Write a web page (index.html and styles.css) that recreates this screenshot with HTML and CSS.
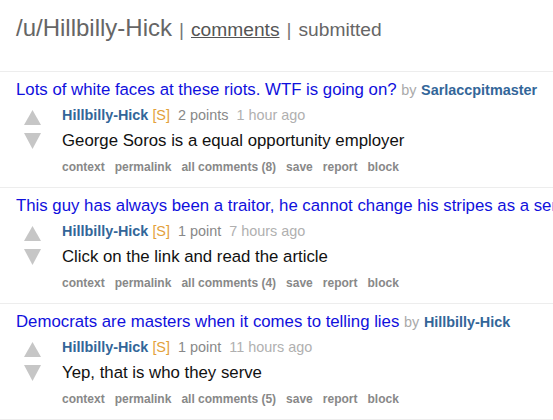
FILE: index.html
```html
<!DOCTYPE html>
<html lang="en">
<head>
<meta charset="utf-8">
<title>/u/Hillbilly-Hick</title>
<link rel="stylesheet" href="styles.css">
</head>
<body>
<header class="header">
  <span class="user">/u/Hillbilly-Hick</span>
  <span class="sep">|</span>
  <a class="tab selected" href="#">comments</a>
  <span class="sep">|</span>
  <a class="tab" href="#">submitted</a>
</header>
<div class="listing">
  <div class="thing">
    <p class="parent"><a class="title" href="#">Lots of white faces at these riots. WTF is going on?</a> <span class="by">by</span> <a class="author" href="#">Sarlaccpitmaster</a></p>
    <div class="row">
      <div class="midcol">
        <svg class="arrow up" width="17" height="15" viewBox="0 0 17 15"><polygon points="8.5,0 17,15 0,15"/></svg>
        <svg class="arrow down" width="17" height="16" viewBox="0 0 17 16"><polygon points="0,0 17,0 8.5,16"/></svg>
      </div>
      <div class="entry">
        <p class="tagline"><a class="author" href="#">Hillbilly-Hick</a> <span class="submitter">[S]</span> <span class="score">2 points</span> <span class="time">1 hour ago</span></p>
        <p class="body">George Soros is a equal opportunity employer</p>
        <ul class="buttons">
          <li>context</li><li>permalink</li><li>all comments (8)</li><li>save</li><li>report</li><li>block</li>
        </ul>
      </div>
    </div>
  </div>
  <div class="thing">
    <p class="parent"><a class="title" href="#">This guy has always been a traitor, he cannot change his stripes as a senator</a> <span class="by">by</span> <a class="author" href="#">Hillbilly-Hick</a></p>
    <div class="row">
      <div class="midcol">
        <svg class="arrow up" width="17" height="15" viewBox="0 0 17 15"><polygon points="8.5,0 17,15 0,15"/></svg>
        <svg class="arrow down" width="17" height="16" viewBox="0 0 17 16"><polygon points="0,0 17,0 8.5,16"/></svg>
      </div>
      <div class="entry">
        <p class="tagline"><a class="author" href="#">Hillbilly-Hick</a> <span class="submitter">[S]</span> <span class="score">1 point</span> <span class="time">7 hours ago</span></p>
        <p class="body">Click on the link and read the article</p>
        <ul class="buttons">
          <li>context</li><li>permalink</li><li>all comments (4)</li><li>save</li><li>report</li><li>block</li>
        </ul>
      </div>
    </div>
  </div>
  <div class="thing">
    <p class="parent"><a class="title" href="#">Democrats are masters when it comes to telling lies</a> <span class="by">by</span> <a class="author" href="#">Hillbilly-Hick</a></p>
    <div class="row">
      <div class="midcol">
        <svg class="arrow up" width="17" height="15" viewBox="0 0 17 15"><polygon points="8.5,0 17,15 0,15"/></svg>
        <svg class="arrow down" width="17" height="16" viewBox="0 0 17 16"><polygon points="0,0 17,0 8.5,16"/></svg>
      </div>
      <div class="entry">
        <p class="tagline"><a class="author" href="#">Hillbilly-Hick</a> <span class="submitter">[S]</span> <span class="score">1 point</span> <span class="time">11 hours ago</span></p>
        <p class="body">Yep, that is who they serve</p>
        <ul class="buttons">
          <li>context</li><li>permalink</li><li>all comments (5)</li><li>save</li><li>report</li><li>block</li>
        </ul>
      </div>
    </div>
  </div>
</div>
</body>
</html>
```
FILE: styles.css
```css
html, body {
  margin: 0;
  padding: 0;
  background: #fff;
}
body {
  font-family: "Liberation Sans", Arial, sans-serif;
  color: #222;
  overflow: hidden;
}
a {
  text-decoration: none;
}
p, ul {
  margin: 0;
  padding: 0;
}

.header {
  height: 71px;
  box-sizing: border-box;
  padding: 14px 16px 0;
  display: flex;
  align-items: baseline;
  gap: 7px;
  line-height: 28px;
}
.user {
  font-size: 24px;
  color: #666;
}
.sep {
  font-size: 19.2px;
  color: #777;
}
.tab {
  font-size: 19.2px;
  color: #666;
}
.tab.selected {
  color: #555;
  text-decoration: underline;
}

.thing {
  border-top: 1px solid #ededed;
  padding: 8px 0 12px 16px;
}
.thing:last-child {
  border-bottom: 1px solid #ededed;
}
.parent {
  font-size: 16.8px;
  line-height: 20px;
  white-space: nowrap;
  overflow: hidden;
}
.title {
  color: #1010dd;
}
.by {
  font-size: 14.4px;
  color: #aaa;
}
.author {
  font-size: 14.4px;
  font-weight: bold;
  color: #369;
}

.row {
  display: flex;
  margin-top: 6px;
}
.midcol {
  width: 46px;
  flex: none;
  box-sizing: border-box;
  padding: 4px 0 0 8px;
  display: flex;
  flex-direction: column;
  gap: 8px;
}
.arrow {
  display: block;
  fill: #c6c6c6;
}
.entry {
  flex: 1;
  min-width: 0;
}
.tagline {
  font-size: 14.4px;
  line-height: 18px;
  color: #888;
}
.submitter {
  color: #e3a13a;
}
.score {
  margin-left: 4px;
  color: #888;
}
.time {
  margin-left: 4px;
  color: #b0b0b0;
}
.body {
  margin-top: 7px;
  font-size: 16.8px;
  line-height: 20px;
  color: #111;
}
.buttons {
  margin-top: 8px;
  list-style: none;
  display: flex;
  gap: 10px;
  font-size: 12px;
  line-height: 16px;
  font-weight: bold;
  color: #888;
}
```
